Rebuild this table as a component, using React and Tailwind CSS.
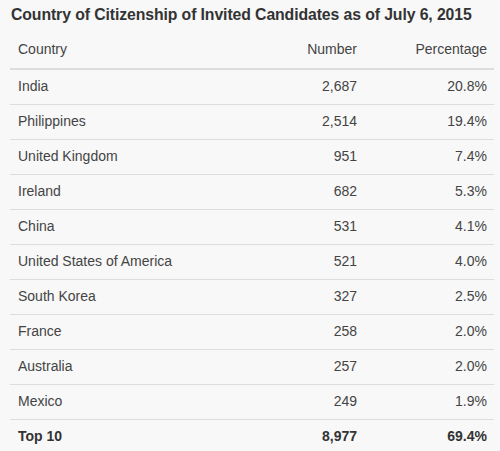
const rows = [
  ['India', '2,687', '20.8%'],
  ['Philippines', '2,514', '19.4%'],
  ['United Kingdom', '951', '7.4%'],
  ['Ireland', '682', '5.3%'],
  ['China', '531', '4.1%'],
  ['United States of America', '521', '4.0%'],
  ['South Korea', '327', '2.5%'],
  ['France', '258', '2.0%'],
  ['Australia', '257', '2.0%'],
  ['Mexico', '249', '1.9%'],
];

export default function App() {
  return (
    <div className="w-[500px] h-[451px] bg-[#f8f8f8] font-['Liberation_Sans',Arial,sans-serif] text-[#444] overflow-hidden">
      <h1 className="pl-[11px] pt-[5px] h-[30px] text-[15.8px] font-bold text-[#333] leading-[20px] tracking-[-0.1px]">
        Country of Citizenship of Invited Candidates as of July 6, 2015
      </h1>
      <table className="ml-[10px] w-[484px] border-collapse text-[14px]">
        <thead>
          <tr className="h-[39px] border-b-2 border-[#ddd]">
            <th className="pl-[8px] text-left font-normal">Country</th>
            <th className="pr-[7px] text-right font-normal">Number</th>
            <th className="pr-[7px] text-right font-normal w-[130px]">Percentage</th>
          </tr>
        </thead>
        <tbody>
          {rows.map(([c, n, p]) => (
            <tr key={c} className="h-[35px] border-b border-[#ddd]">
              <td className="pl-[8px]">{c}</td>
              <td className="pr-[7px] text-right">{n}</td>
              <td className="pr-[7px] text-right">{p}</td>
            </tr>
          ))}
          <tr className="h-[35px] font-bold text-[#333]">
            <td className="pl-[8px]">Top 10</td>
            <td className="pr-[7px] text-right">8,977</td>
            <td className="pr-[7px] text-right">69.4%</td>
          </tr>
        </tbody>
      </table>
    </div>
  );
}
